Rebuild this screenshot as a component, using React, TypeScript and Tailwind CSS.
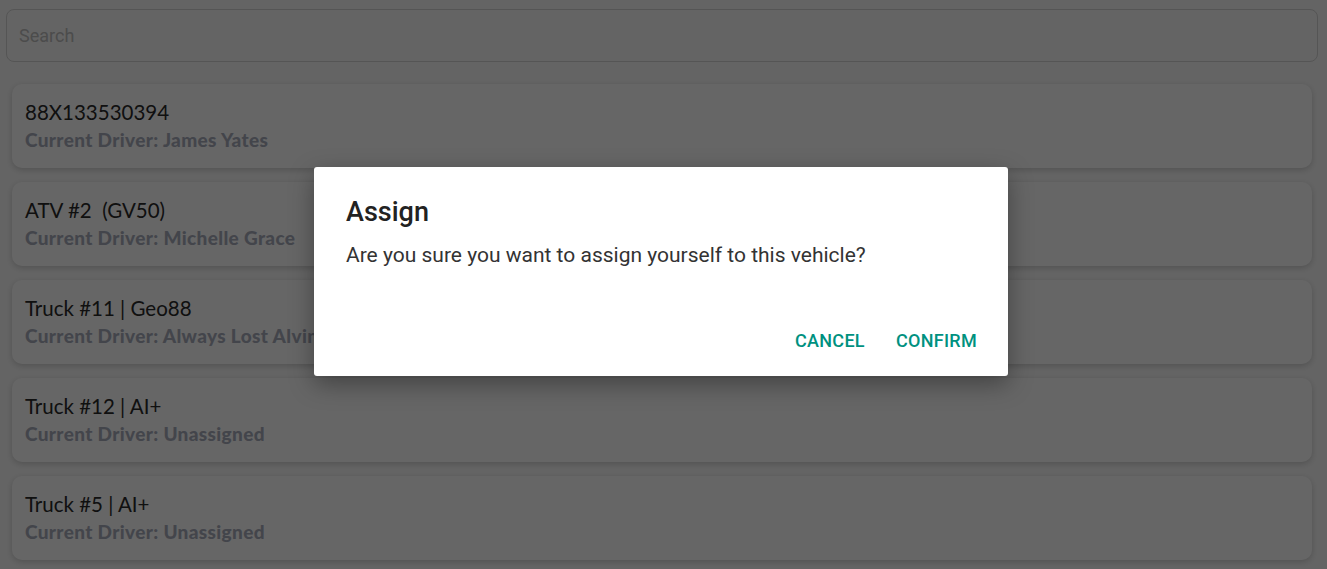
const vehicles = [
  { name: "88X133530394", driver: "James Yates" },
  { name: "ATV #2  (GV50)", driver: "Michelle Grace" },
  { name: "Truck #11 | Geo88", driver: "Always Lost Alvin" },
  { name: "Truck #12 | AI+", driver: "Unassigned" },
  { name: "Truck #5 | AI+", driver: "Unassigned" },
];

export default function App() {
  return (
    <div className="relative h-[569px] w-[1327px] overflow-hidden bg-[#fafafa] font-['Lato',sans-serif]">
      <div className="pl-[6px] pr-[9px] pt-[9px]">
        <div className="flex h-[53px] items-center rounded-[8px] border border-[#d4d4d4] bg-[#fafafa] px-[12px]">
          <span className="font-['Roboto',sans-serif] text-[18px] text-[#bdbdbd]">Search</span>
        </div>
      </div>

      <div className="mt-[22px] flex flex-col gap-[14px] pl-[12px] pr-[15px]">
        {vehicles.map((v) => (
          <div
            key={v.name}
            className="flex h-[84px] flex-col justify-center rounded-[10px] bg-white px-[13px] pb-[3px] shadow-[0_2px_6px_rgba(0,0,0,0.18)]"
          >
            <div className="whitespace-pre text-[20.5px] leading-[26px] text-[#2a2a2a]">{v.name}</div>
            <div className="mt-[4px] text-[19px] font-black leading-[22px] tracking-[0.35px] text-[#a9adbc]">
              Current Driver: {v.driver}
            </div>
          </div>
        ))}
      </div>

      {/* modal backdrop */}
      <div className="absolute inset-0 bg-black/60" />

      <div className="absolute left-[314px] top-[167px] flex h-[209px] w-[694px] flex-col rounded-[3px] bg-white font-['Roboto',sans-serif] shadow-[0_8px_24px_rgba(0,0,0,0.35)]">
        <div className="px-[32px] pt-[29px]">
          <h2 className="text-[27px] font-medium leading-[32px] text-[#222]">Assign</h2>
          <p className="mt-[13px] text-[21px] leading-[28px] text-[#333]">
            Are you sure you want to assign yourself to this vehicle?
          </p>
        </div>
        <div className="mt-auto flex justify-end gap-[31px] pb-[22px] pr-[31px]">
          <button className="text-[18px] font-medium tracking-[0.3px] text-[#00917f]">CANCEL</button>
          <button className="text-[18px] font-medium tracking-[0.3px] text-[#00917f]">CONFIRM</button>
        </div>
      </div>
    </div>
  );
}
